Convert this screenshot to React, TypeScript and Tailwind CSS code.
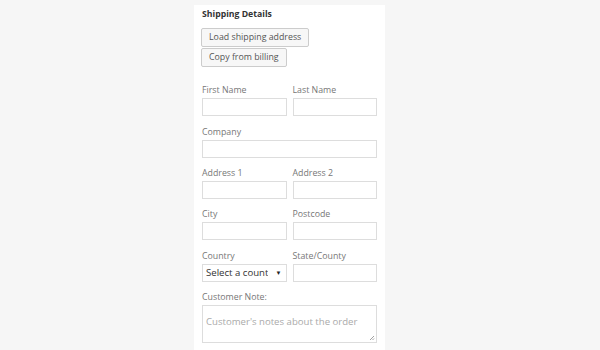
export default function App() {
  const label = "block text-[8.8px] leading-[13px] text-[#777]";
  const input = "block h-[18px] w-full border border-[#ddd] bg-white";
  const button =
    "-ml-px h-[19px] rounded-[2px] border border-[#ccc] bg-[#f7f7f7] px-[7px] text-[8.8px] leading-[17px] text-[#555]";

  return (
    <div className="min-h-[350px] w-[600px] overflow-hidden bg-[#f6f6f6] font-['Open_Sans',sans-serif]">
      <div className="ml-[194px] mt-[5px] h-[345px] w-[191px] bg-white px-[8px] pt-[3px]">
        <h3 className="text-[8.7px] font-bold leading-[13px] text-[#333]">Shipping Details</h3>

        <div className="mt-[7px] flex flex-col items-start gap-[1px]">
          <button className={button}>Load shipping address</button>
          <button className={button}>Copy from billing</button>
        </div>

        <div className="mt-[17px] grid grid-cols-2 gap-x-[6px]">
          <div>
            <label className={label}>First Name</label>
            <div className={`mt-[1px] ${input}`} />
          </div>
          <div>
            <label className={label}>Last Name</label>
            <div className={`mt-[1px] ${input}`} />
          </div>
        </div>

        <div className="mt-[10px]">
          <label className={label}>Company</label>
          <div className={`mt-[1px] ${input}`} />
        </div>

        <div className="mt-[9px] grid grid-cols-2 gap-x-[6px]">
          <div>
            <label className={label}>Address 1</label>
            <div className={`mt-[1px] ${input}`} />
          </div>
          <div>
            <label className={label}>Address 2</label>
            <div className={`mt-[1px] ${input}`} />
          </div>
        </div>

        <div className="mt-[9px] grid grid-cols-2 gap-x-[6px]">
          <div>
            <label className={label}>City</label>
            <div className={`mt-[1px] ${input}`} />
          </div>
          <div>
            <label className={label}>Postcode</label>
            <div className={`mt-[1px] ${input}`} />
          </div>
        </div>

        <div className="mt-[10px] grid grid-cols-2 gap-x-[6px]">
          <div>
            <label className={label}>Country</label>
            <div className="mt-[1px] flex h-[18px] w-full items-center justify-between border border-[#ddd] bg-white pl-[3px] pr-[4px]">
              <span className="overflow-hidden whitespace-nowrap text-[9.6px] leading-[16px] text-[#333]">Select a count</span>
              <span className="text-[6px] leading-none text-[#222]">▼</span>
            </div>
          </div>
          <div>
            <label className={label}>State/County</label>
            <div className={`mt-[1px] ${input}`} />
          </div>
        </div>

        <div className="mt-[9px]">
          <label className={label}>Customer Note:</label>
          <div className="relative mt-[1px] h-[38px] w-full border border-[#ddd] bg-white px-[3px] pt-[1px]">
            <span className="whitespace-nowrap text-[9.6px] leading-[15px] text-[#aaa]">Customer's notes about the order</span>
            <svg className="absolute bottom-[1px] right-[1px]" width="6" height="6" viewBox="0 0 6 6">
              <path d="M5 1 L1 5 M5 3.5 L3.5 5" stroke="#888" strokeWidth="0.8" />
            </svg>
          </div>
        </div>
      </div>
    </div>
  );
}
